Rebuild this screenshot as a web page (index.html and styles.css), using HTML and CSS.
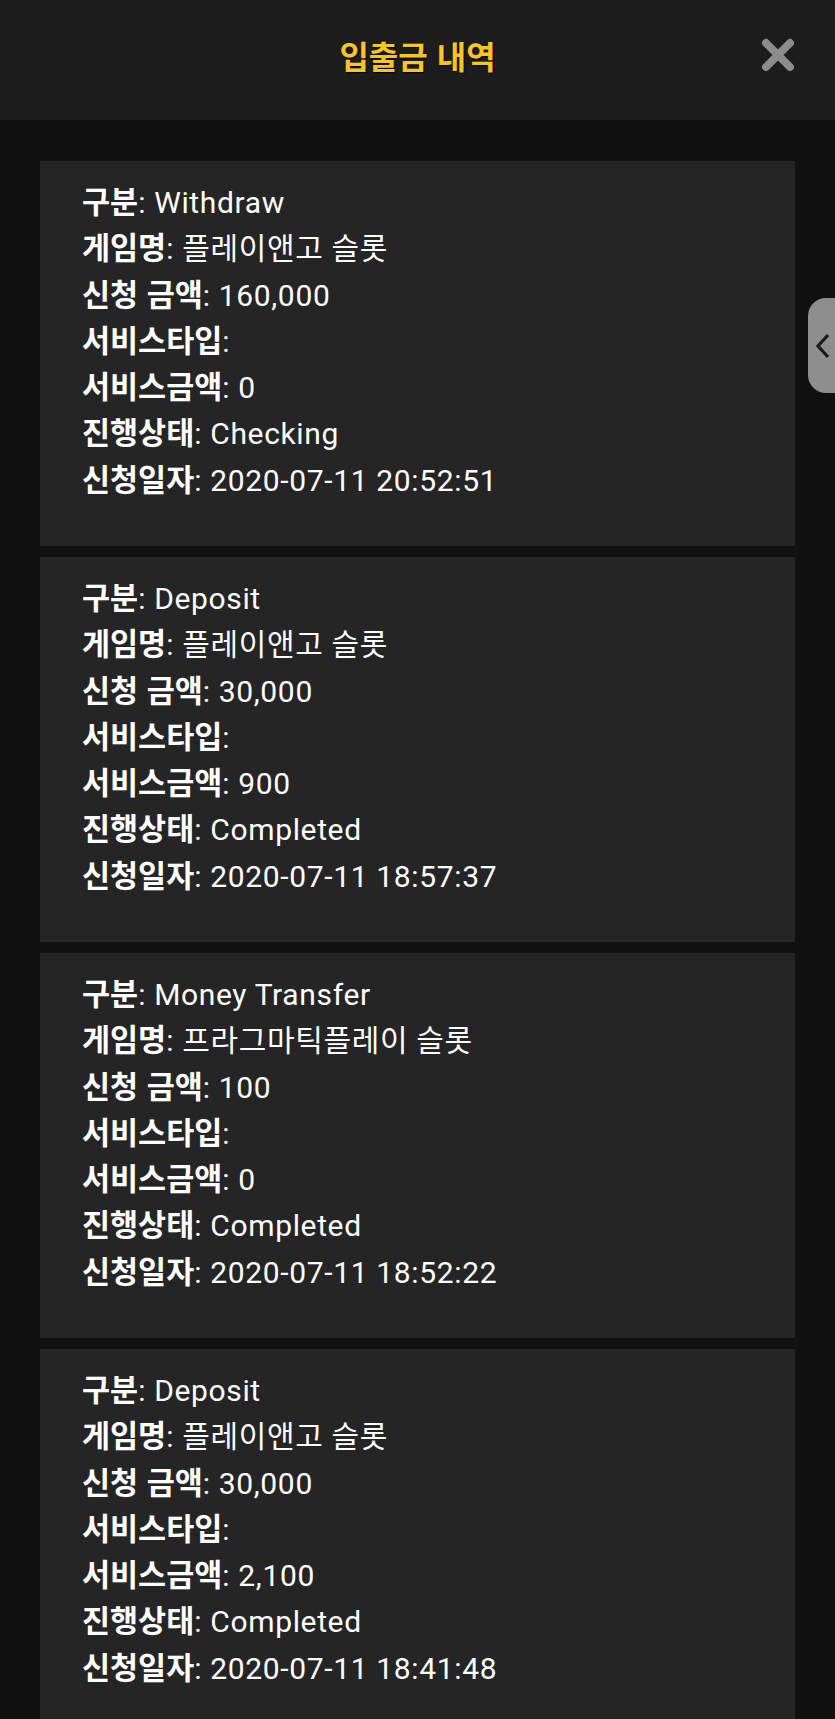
FILE: index.html
```html
<!DOCTYPE html>
<html lang="ko">
<head>
  <meta charset="UTF-8"/>
  <meta name="viewport" content="width=device-width, initial-scale=1.0"/>
  <title>입출금 내역</title>
  <link rel="stylesheet" href="styles.css">
</head>
<body>

<header class="top">
  <h1>입출금 내역</h1>
  <button class="close-btn" aria-label="닫기">
    <svg viewBox="0 0 34 34" width="34" height="34"><path d="M5 5L29 29M29 5L5 29" stroke="#8c8c8c" stroke-width="8" stroke-linecap="round"/></svg>
  </button>
</header>

<div class="history">
  <div class="item">
    <p><b>구분</b>: Withdraw</p>
    <p><b>게임명</b>: 플레이앤고 슬롯</p>
    <p><b>신청 금액</b>: 160,000</p>
    <p><b>서비스타입</b>:</p>
    <p><b>서비스금액</b>: 0</p>
    <p><b>진행상태</b>: Checking</p>
    <p><b>신청일자</b>: 2020-07-11 20:52:51</p>
  </div>
  <div class="item">
    <p><b>구분</b>: Deposit</p>
    <p><b>게임명</b>: 플레이앤고 슬롯</p>
    <p><b>신청 금액</b>: 30,000</p>
    <p><b>서비스타입</b>:</p>
    <p><b>서비스금액</b>: 900</p>
    <p><b>진행상태</b>: Completed</p>
    <p><b>신청일자</b>: 2020-07-11 18:57:37</p>
  </div>
  <div class="item">
    <p><b>구분</b>: Money Transfer</p>
    <p><b>게임명</b>: 프라그마틱플레이 슬롯</p>
    <p><b>신청 금액</b>: 100</p>
    <p><b>서비스타입</b>:</p>
    <p><b>서비스금액</b>: 0</p>
    <p><b>진행상태</b>: Completed</p>
    <p><b>신청일자</b>: 2020-07-11 18:52:22</p>
  </div>
  <div class="item">
    <p><b>구분</b>: Deposit</p>
    <p><b>게임명</b>: 플레이앤고 슬롯</p>
    <p><b>신청 금액</b>: 30,000</p>
    <p><b>서비스타입</b>:</p>
    <p><b>서비스금액</b>: 2,100</p>
    <p><b>진행상태</b>: Completed</p>
    <p><b>신청일자</b>: 2020-07-11 18:41:48</p>
  </div>
</div>

<button class="side-tab" aria-label="열기">
  <svg viewBox="0 0 16 26" width="16" height="26"><path d="M13 2L3 13L13 24" fill="none" stroke="#1a1a1a" stroke-width="3.2"/></svg>
</button>

</body>
</html>
```

FILE: styles.css
```css
*,*::before,*::after{box-sizing:border-box;margin:0;padding:0;}
body{font-family:Roboto,"Noto Sans CJK KR",sans-serif;background:#111;color:#fff;overflow-x:hidden;}
.top{height:120px;background:#1d1d1d;display:flex;align-items:center;justify-content:center;position:relative;}
.top h1{font-family:"Noto Sans CJK KR",sans-serif;font-size:32px;font-weight:700;color:#fcc424;text-shadow:1px 1px 1px #000;margin-top:-10px;}
.close-btn{position:absolute;right:40px;top:38px;width:34px;height:34px;background:none;border:none;cursor:pointer;}
.close-btn svg{display:block;}
.history{padding:41px 40px 0;display:flex;flex-direction:column;gap:11px;}
.item{background:#252525;height:385px;padding:19px 0 0 42px;}
.item p{font-size:30px;line-height:46.3px;height:46.3px;white-space:nowrap;letter-spacing:.65px;}
.item b{font-family:"Noto Sans CJK KR",sans-serif;font-size:30.5px;font-weight:700;letter-spacing:0;line-height:1;}
.side-tab{position:fixed;right:0;top:298px;width:27px;height:95px;background:#8e8e8e;border:none;border-radius:18px 0 0 18px;display:flex;align-items:center;justify-content:flex-start;padding-left:7px;}
.side-tab svg{display:block;}
```
